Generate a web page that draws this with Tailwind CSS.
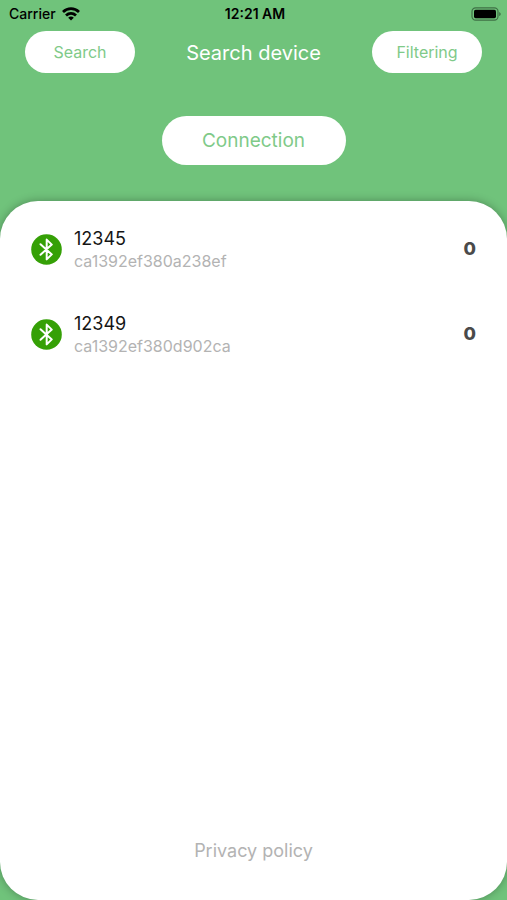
<!DOCTYPE html>
<html lang="en">
<head>
<meta charset="utf-8">
<meta name="viewport" content="width=device-width, initial-scale=1">
<title>Search device</title>
<script src="https://cdn.jsdelivr.net/npm/@tailwindcss/browser@4"></script>
</head>
<body class="flex min-h-screen flex-col bg-[#70c37b] font-['Inter',sans-serif]">
  <div class="grid h-7 grid-cols-3 items-center pr-1.5 pl-[9px] text-[14px] leading-5 text-black">
    <div class="flex items-center gap-1.5">
      <span class="font-medium">Carrier</span>
      <svg class="h-[14px] w-[18px]" viewBox="0 0 18 14" fill="none" stroke="#000" stroke-width="2.8" aria-label="Wi-Fi">
        <path d="M1 4.9C5.6 .6 12.4 .6 17 4.9"/>
        <path d="M4 8.5c2.9-2.7 7.1-2.7 10 0"/>
        <path d="M6.2 10.7c1.6-1.5 4-1.5 5.6 0L9 13.6z" fill="#000" stroke="none"/>
      </svg>
    </div>
    <span class="text-center font-semibold">12:21 AM</span>
    <svg class="h-[14px] w-[30px] justify-self-end" viewBox="0 0 30 14" aria-label="Battery">
      <rect x="1" y=".8" width="26" height="12.4" rx="3.6" fill="none" stroke="#3f7046" stroke-width="1.2"/>
      <rect x="3" y="2.8" width="22" height="8.4" rx="1.6" fill="#000"/>
      <path d="M28.2 4.9c2 .8 2 3.4 0 4.2z" fill="#3f7046"/>
    </svg>
  </div>

  <header class="px-[25px] pt-[3px]">
    <div class="flex items-center justify-between">
      <button class="h-[42px] w-[110px] rounded-full bg-white text-[16px] leading-5 text-[#7fca89]">Search</button>
      <h1 class="pt-0.5 text-[20px] leading-6 text-white">Search device</h1>
      <button class="h-[42px] w-[110px] rounded-full bg-white text-[16px] leading-5 text-[#7fca89]">Filtering</button>
    </div>
    <button class="mx-auto mt-[43px] block h-[49px] w-[184px] rounded-full bg-white text-[19px] leading-6 text-[#7fca89]">Connection</button>
  </header>

  <main class="mt-9 flex flex-1 flex-col rounded-[38px] bg-white px-[31px] pt-[26px] pb-[37px] shadow-[0_0_10px_rgba(0,0,0,0.3)]">
    <ul class="flex flex-col gap-[41px]">
      <li class="flex items-center gap-3">
        <svg class="size-[31px] shrink-0" viewBox="0 0 31 31" aria-label="Bluetooth">
          <circle cx="15.5" cy="15.5" r="15.3" fill="#35a006"/>
          <path d="M9.5 10.2 20.8 20.4 15.7 25.4V5.6L20.8 10.6 9.5 20.8" fill="none" stroke="#fff" stroke-width="2" stroke-linejoin="round" stroke-linecap="round"/>
        </svg>
        <div class="flex-1">
          <h2 class="text-[18px] leading-6 text-[#151515]">12345</h2>
          <p class="text-[16px] leading-5 text-[#b3b3b3]">ca1392ef380a238ef</p>
        </div>
        <span class="text-[18px] leading-6 font-extrabold text-[#4a4a4a]">0</span>
      </li>
      <li class="flex items-center gap-3">
        <svg class="size-[31px] shrink-0" viewBox="0 0 31 31" aria-label="Bluetooth">
          <circle cx="15.5" cy="15.5" r="15.3" fill="#35a006"/>
          <path d="M9.5 10.2 20.8 20.4 15.7 25.4V5.6L20.8 10.6 9.5 20.8" fill="none" stroke="#fff" stroke-width="2" stroke-linejoin="round" stroke-linecap="round"/>
        </svg>
        <div class="flex-1">
          <h2 class="text-[18px] leading-6 text-[#151515]">12349</h2>
          <p class="text-[16px] leading-5 text-[#b3b3b3]">ca1392ef380d902ca</p>
        </div>
        <span class="text-[18px] leading-6 font-extrabold text-[#4a4a4a]">0</span>
      </li>
    </ul>
    <a href="#" class="mx-auto mt-auto text-[18px] leading-6 text-[#b3b3b3]">Privacy policy</a>
  </main>
</body>
</html>
